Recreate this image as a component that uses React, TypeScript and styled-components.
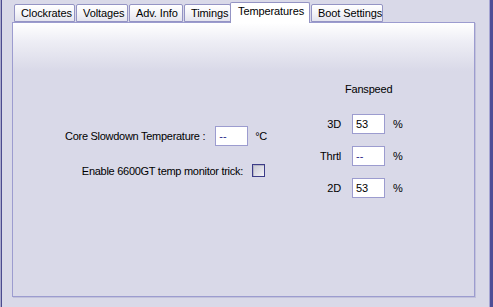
import React from "react";
import styled, { createGlobalStyle } from "styled-components";

const Global = createGlobalStyle`
  html, body { margin: 0; padding: 0; background: #d9d9e8; }
  body { font-family: "Liberation Sans", Arial, sans-serif; font-size: 11px; color: #000; }
`;

const Window = styled.div`
  width: 493px;
  height: 307px;
  box-sizing: border-box;
  background: #d9d9e8;
  padding-left: 12px;
  box-shadow: inset 1px 0 0 #a9a9cc, inset 2px 0 0 #4b4b8f, inset -3px 0 0 #4e4e96, inset -4px 0 0 #a4a4d2;
  overflow: hidden;
`;

const TabRow = styled.div`
  display: flex;
  align-items: flex-end;
  height: 22px;
  padding-left: 2px;
`;

const Tab = styled.div<{ $w: number; $active?: boolean }>`
  box-sizing: border-box;
  width: ${(p) => p.$w}px;
  height: ${(p) => (p.$active ? 21 : 18)}px;
  margin: ${(p) => (p.$active ? "0 1px -1px -2px" : "0 1px 0 0")};
  border: 1px solid #9494c4;
  border-bottom: ${(p) => (p.$active ? "none" : "1px solid #9494c4")};
  border-radius: 2px 2px 0 0;
  background: ${(p) =>
    p.$active ? "#ffffff" : "linear-gradient(to bottom, #ffffff 0%, #f4f4f8 50%, #e4e4ee 100%)"};
  display: flex;
  align-items: ${(p) => (p.$active ? "flex-start" : "center")};
  padding: ${(p) => (p.$active ? "2px 0 0 7px" : "0 0 0 6px")};
  position: relative;
  z-index: ${(p) => (p.$active ? 2 : 1)};
  white-space: nowrap;
  font-size: 11px;
  letter-spacing: -0.1px;
`;

const Pane = styled.div`
  box-sizing: border-box;
  width: 463px;
  height: 275px;
  border: 1px solid #9c9ccf;
  background: linear-gradient(to bottom, #ffffff 0px, #eeeef5 18px, #d9d9e8 48px, #d9d9e8 100%);
  box-shadow: 1px 1px 0 #c2c2db;
  display: flex;
  position: relative;
  z-index: 1;
`;

const LeftCol = styled.div`
  width: 256px;
  display: flex;
  flex-direction: column;
  align-items: flex-end;
  padding-top: 103px;
  gap: 18px;
`;

const Row = styled.div`
  display: flex;
  align-items: center;
  white-space: nowrap;
`;

const Label = styled.span<{ $gap: number }>`
  margin-right: ${(p) => p.$gap}px;
  letter-spacing: -0.28px;
`;

const Unit = styled.span<{ $gap: number }>`
  margin-left: ${(p) => p.$gap}px;
  margin-right: 2px;
  letter-spacing: -0.3px;
`;

const Field = styled.div<{ $dim?: boolean }>`
  box-sizing: border-box;
  width: 33px;
  height: 20px;
  background: #fff;
  border: 1px solid #9c9ccf;
  padding: 0 0 0 3px;
  display: flex;
  align-items: center;
  font-size: 11px;
  color: ${(p) => (p.$dim ? "#2a2a8a" : "#000")};
`;

const Check = styled.div`
  box-sizing: border-box;
  width: 13px;
  height: 13px;
  margin-right: 4px;
  border: 1px solid #3c3c88;
  background: linear-gradient(135deg, #c8c8d4 0%, #e0e0e8 60%, #f4f4f8 100%);
  box-shadow: inset 1px 1px 0 #b4b4c4;
`;

const RightCol = styled.div`
  margin-left: 32px;
  padding-top: 60px;
  display: grid;
  grid-template-columns: 40px 33px auto;
  column-gap: 11px;
  row-gap: 12px;
  align-items: center;
  align-content: start;
`;

const Header = styled.div`
  grid-column: 1 / span 3;
  padding-left: 44px;
  margin-bottom: 6px;
  line-height: 13px;
  letter-spacing: -0.2px;
`;

const RowLabel = styled.span`
  text-align: right;
  letter-spacing: -0.2px;
`;

const Percent = styled.span`
  margin-left: -3px;
`;

const tabs: { name: string; w: number; active?: boolean }[] = [
  { name: "Clockrates", w: 61 },
  { name: "Voltages", w: 52 },
  { name: "Adv. Info", w: 54 },
  { name: "Timings", w: 47 },
  { name: "Temperatures", w: 80, active: true },
  { name: "Boot Settings", w: 72 },
];

const fans = [
  { label: "3D", value: "53" },
  { label: "Thrtl", value: "--", dim: true },
  { label: "2D", value: "53" },
];

export default function App() {
  return (
    <>
      <Global />
      <Window>
        <TabRow>
          {tabs.map((t) => (
            <Tab key={t.name} $w={t.w} $active={t.active}>
              {t.name}
            </Tab>
          ))}
        </TabRow>
        <Pane>
          <LeftCol>
            <Row>
              <Label $gap={10}>Core Slowdown Temperature :</Label>
              <Field $dim>--</Field>
              <Unit $gap={7}>°C</Unit>
            </Row>
            <Row>
              <Label $gap={9}>Enable 6600GT temp monitor trick:</Label>
              <Check />
            </Row>
          </LeftCol>
          <RightCol>
            <Header>Fanspeed</Header>
            {fans.map((f) => (
              <React.Fragment key={f.label}>
                <RowLabel>{f.label}</RowLabel>
                <Field $dim={f.dim}>{f.value}</Field>
                <Percent>%</Percent>
              </React.Fragment>
            ))}
          </RightCol>
        </Pane>
      </Window>
    </>
  );
}
